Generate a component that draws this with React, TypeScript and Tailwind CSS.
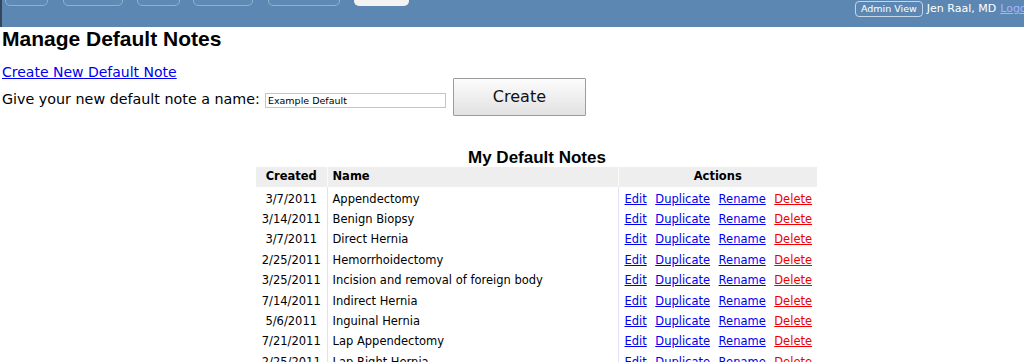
import React from "react";

const rows: [string, string][] = [
  ["3/7/2011", "Appendectomy"],
  ["3/14/2011", "Benign Biopsy"],
  ["3/7/2011", "Direct Hernia"],
  ["2/25/2011", "Hemorrhoidectomy"],
  ["3/25/2011", "Incision and removal of foreign body"],
  ["7/14/2011", "Indirect Hernia"],
  ["5/6/2011", "Inguinal Hernia"],
  ["7/21/2011", "Lap Appendectomy"],
  ["2/25/2011", "Lap Right Hernia"],
];

const tabs = [
  { w: "w-[43px]", ml: "ml-[3px]" },
  { w: "w-[60px]", ml: "ml-[15px]" },
  { w: "w-[43px]", ml: "ml-[14px]" },
  { w: "w-[60px]", ml: "ml-[13px]" },
  { w: "w-[72px]", ml: "ml-[15px]" },
];

export default function App() {
  return (
    <div className="w-[1024px] h-[362px] overflow-hidden bg-white font-['DejaVu_Sans',sans-serif] text-black">
      <header className="h-[27px] bg-[#5c87b3] flex items-start overflow-hidden border-l-[2px] border-[#34465a]">
        <div className="w-[853px] shrink-0 flex items-start">
          {tabs.map((t, i) => (
            <div
              key={i}
              className={`${t.w} ${t.ml} h-[20px] -mt-[14px] rounded-[5px] border border-[#93afcc] bg-[#5f8ab5]`}
            />
          ))}
          <div className="w-[55px] ml-[14px] h-[20px] -mt-[14px] rounded-[5px] bg-[#f3f3f3]" />
        </div>
        <div className="flex items-center whitespace-nowrap pt-[1px]">
          <span className="h-[16px] px-[5px] rounded-[4px] border border-[#c6d5e5] text-[9.5px] leading-[14px] text-white">
            Admin View
          </span>
          <span className="ml-[4px] text-[11px] leading-[16px] text-white font-medium">Jen Raal, MD</span>
          <a href="#" className="ml-[4px] text-[11px] leading-[16px] text-[#a9b2ff] underline">
            Logout
          </a>
        </div>
      </header>

      <main className="pl-[2px]">
        <h1 className="font-['Liberation_Sans',Arial,sans-serif] font-bold text-[21px] leading-[24px]">
          Manage Default Notes
        </h1>
        <a href="#" className="block mt-[14px] text-[14px] leading-[14px] text-[#0000ee] underline">
          Create New Default Note
        </a>
        <div className="flex items-start -mt-[1px]">
          <span className="mt-[13px] text-[14.3px] leading-[16px]">Give your new default note a name:</span>
          <input
            className="ml-[5px] mt-[15px] w-[181px] h-[15px] border border-[#c4c4c4] px-[2px] text-[9.5px] leading-[13px] outline-none"
            defaultValue="Example Default"
          />
          <button className="ml-[7px] w-[133px] h-[38px] border border-[#9c9c9c] rounded-[1px] bg-gradient-to-b from-[#fcfcfc] to-[#e2e2e2] text-[16px] leading-[20px] text-[#111]">
            Create
          </button>
        </div>

        <section className="ml-[254px] w-[561px] mt-[30.5px]">
          <h2 className="text-center font-['Liberation_Sans',Arial,sans-serif] font-bold text-[17px] leading-[20px] pl-[1px] pt-[1px]">
            My Default Notes
          </h2>
          <table className="w-[561px] border-collapse table-fixed text-[11.5px] -mt-[1px]">
            <colgroup>
              <col className="w-[71px]" />
              <col className="w-[291px]" />
              <col className="w-[199px]" />
            </colgroup>
            <thead>
              <tr className="h-[20px] bg-[#eeeeee]">
                <th className="text-center font-bold p-0 pt-[1px]">Created</th>
                <th className="text-left font-bold pl-[5px] pt-[1px] border-l border-[#fafafa]">Name</th>
                <th className="text-center font-bold p-0 pt-[1px] border-l border-[#fafafa]">Actions</th>
              </tr>
            </thead>
            <tbody>
              {rows.map(([d, n], i) => (
                <tr key={i} className="h-[20.43px]">
                  <td className="text-center p-0 pt-[5px] align-top leading-[14px] whitespace-nowrap">{d}</td>
                  <td className="pl-[5px] pr-0 pb-0 pt-[5px] align-top leading-[14px] border-l border-[#e0e0f6] whitespace-nowrap">{n}</td>
                  <td className="p-0 pt-[5px] align-top leading-[14px] border-l border-[#e0e0f6]">
                    <div className="flex gap-[8.5px] pl-[6px] whitespace-nowrap">
                      <a href="#" className="text-[#0000ee] underline">Edit</a>
                      <a href="#" className="text-[#0000ee] underline">Duplicate</a>
                      <a href="#" className="text-[#0000ee] underline">Rename</a>
                      <a href="#" className="text-[#ee0000] underline">Delete</a>
                    </div>
                  </td>
                </tr>
              ))}
            </tbody>
          </table>
        </section>
      </main>
    </div>
  );
}
